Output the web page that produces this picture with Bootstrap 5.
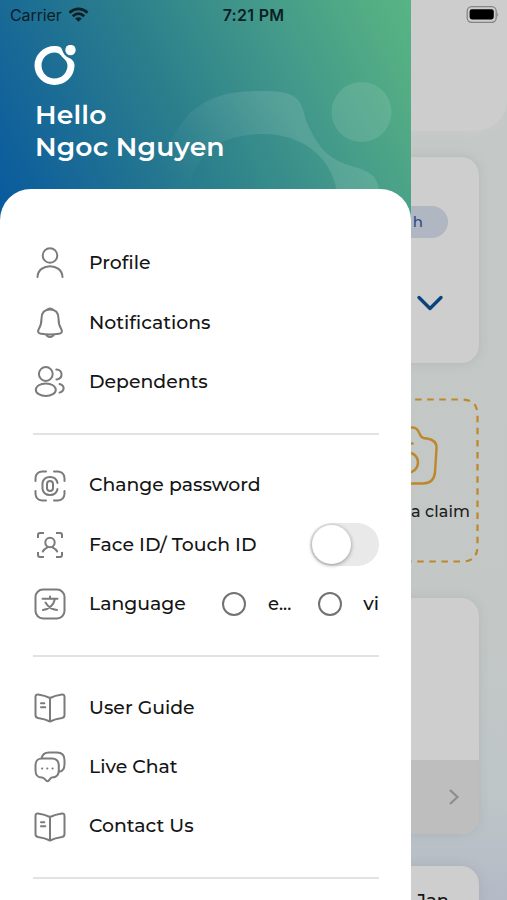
<!DOCTYPE html>
<html lang="en">
<head>
<meta charset="utf-8">
<meta name="viewport" content="width=device-width, initial-scale=1">
<title>Menu</title>
<link href="https://cdn.jsdelivr.net/npm/bootstrap@5.3.0/dist/css/bootstrap.min.css" rel="stylesheet">
<style>
body{font-family:Montserrat,Inter,sans-serif;color:#151515;background:#c3c8c6}
.phone{width:507px;height:900px;background:linear-gradient(180deg,#c4c9c7 0,#c3c8c6 620px,#bfc6c8 790px,#b4bac6 900px)}
/* dimmed page behind the drawer */
.page-top{height:131px;background:#cdcdcd;border-radius:0 0 32px 0;box-shadow:0 0 12px #c9cccb}
.tile{width:479px;background:#cecece;box-shadow:0 0 10px rgba(120,135,135,.25)}
.plan{height:206px;margin-top:26px;border-radius:0 18px 18px 0}
.pill{width:60px;height:32px;border-radius:16px;background:#b0b6c2;color:#2c4a86;font-size:15px;font-weight:500;margin:49px 31px 0 0;padding-right:25px}
.chev{margin:53px 33px 0 0}
.claim{width:479px;height:165px;margin-top:35px}
.claim-text{font-size:16px;font-weight:500;letter-spacing:.1px;line-height:24px;margin-right:9px;margin-top:12px;color:#1c1f1e}
.news{height:236px;margin-top:35px;border-radius:0 18px 18px 0}
.news-foot{height:74px;background:#bebebe;border-radius:0 0 18px 0;padding-right:19px}
.last{height:40px;margin-top:32px;border-radius:0 18px 0 0;padding:23px 30px 0 0;font-size:18px;font-weight:500;line-height:24px}
/* drawer */
.drawer{width:411px;background:#fff}
.hero{height:220px;padding:45px 34px 0;color:#fff;background:linear-gradient(64deg,#075a9e 0%,#176798 17%,#2a7e8c 43%,#43998a 70%,#54ae84 92%,#57b483 100%)}
.greet{font-size:26.6px;font-weight:600;line-height:32px;letter-spacing:.18px;margin:13px 0 0 1px}
.sheet{margin-top:-31px;border-radius:31px 31px 0 0;background:#fff;padding:44.6px 32px 0 33px}
.item{height:59.4px;font-size:18.85px;font-weight:500}
.item svg{width:34px;height:34px;margin-right:22px;flex:none}
.rule{height:2px;background:#e2e2e2;margin:21px 0 21.1px}
.switch-track{width:69px;height:43px;border-radius:22px;background:#e9e9e9;padding:2px}
.knob{width:39px;height:39px;border-radius:50%;background:#fff;box-shadow:0 1px 4px rgba(0,0,0,.38)}
.ring{width:24px;height:24px;border:2px solid #727272;border-radius:50%}
.lang-en{width:24px;margin:0 26px 0 22px;font-size:18px;white-space:nowrap}
.lang-vi{width:37px}
.status{font-family:Inter,sans-serif;font-size:16px;line-height:20px;color:#0c2025;height:30px;padding:0 8px 0 10px}
.carrier{letter-spacing:-.1px}
.wifi{margin-left:6px}
.time{letter-spacing:.3px}
.ic{fill:none;stroke:#7b7b7b;stroke-width:2;stroke-linecap:round;stroke-linejoin:round}
</style>
<script src="https://cdn.jsdelivr.net/npm/bootstrap@5.3.0/dist/js/bootstrap.bundle.min.js"></script>
</head>
<body>
<div class="phone position-relative overflow-hidden">

  <main class="d-flex flex-column">
    <div class="page-top"></div>
    <section class="tile plan d-flex flex-column align-items-end">
      <div class="pill d-flex align-items-center justify-content-end">h</div>
      <svg class="chev" width="32" height="24" viewBox="0 0 32 24" fill="none" stroke="#0b4279" stroke-width="3.4" stroke-linecap="round" stroke-linejoin="round"><path d="M5 6.500 16 17.500 27 6.500"/></svg>
    </section>
    <section class="claim position-relative d-flex flex-column align-items-end">
      <svg class="position-absolute top-0 start-0" width="479" height="165" fill="none" stroke="#bd872a" stroke-width="2.2"><path stroke-dasharray="6.500 5.600" d="M403 1.500H462Q477.500 1.500 477.500 17V148Q477.500 163.500 462 163.500H403"/></svg>
      <svg width="78" height="90" viewBox="401 398.500 78 90" fill="none" stroke="#bd872a" stroke-width="2.4" stroke-linecap="round"><path d="M401 428H412C417 428 418 431 420 435 421 438 423 439 427 439 433 440 437 443 436.500 449L435 473C434 481 430 484 423 484H401"/><circle cx="408" cy="463" r="10"/><path d="M404 444H412.500"/></svg>
      <div class="claim-text">Make a claim</div>
    </section>
    <section class="tile news d-flex flex-column justify-content-end">
      <div class="news-foot d-flex align-items-center justify-content-end">
        <svg width="12" height="18" viewBox="0 0 12 18" fill="none" stroke="#8d8d8d" stroke-width="2.200"><path d="M2 2 9.500 9 2 16"/></svg>
      </div>
    </section>
    <section class="tile last text-end">Jan</section>
  </main>

  <aside class="drawer position-absolute top-0 start-0 h-100 overflow-hidden">
    <header class="hero position-relative">
      <svg class="position-absolute top-0 start-0" width="411" height="220">
        <defs><linearGradient id="fade" gradientUnits="userSpaceOnUse" x1="165" y1="170" x2="260" y2="90"><stop offset="0" stop-color="#fff" stop-opacity="0"/><stop offset="1" stop-color="#fff" stop-opacity=".12"/></linearGradient></defs>
        <path fill="url(#fade)" d="M155 200C157 169 168 138 189 114 211 94 235 91 262 91 279 91 290 92 297 99 304 106 303 114 308 125 315 141 323 153 338 161 350 167 365 168 373 176 378 181 379 188 382 200H338C335 157 302 134 263 134 216 134 188 158 190 200Z"/>
        <circle cx="361.500" cy="112" r="30" fill="#fff" fill-opacity=".11"/>
      </svg>
      <svg class="d-block position-relative" width="42" height="41" viewBox="34 45 42 41"><path fill="#fff" fill-rule="evenodd" d="M54.500 46C58 45.800 61 46.500 62 49.500 63 53 65 56 68 57.500 71 58.500 74.500 61 74.500 65.500A20 19.500 0 1 1 54.500 46ZM54.500 52.500A13 13 0 1 0 67.500 65.500C67 60 63.500 59 61 55.500 59.500 53.500 57.500 52.500 54.500 52.500Z"/><circle cx="70.500" cy="50" r="5.200" fill="#fff"/></svg>
      <div class="greet position-relative text-nowrap"><div>Hello</div><div>Ngoc Nguyen</div></div>
    </header>

    <nav class="sheet position-relative">
      <div class="item d-flex align-items-center">
        <svg class="ic" viewBox="0 0 34 34"><circle cx="17" cy="9.500" r="7.300"/><path d="M4.500 31C5 16.500 29 16.500 29.500 31"/></svg>Profile
      </div>
      <div class="item d-flex align-items-center">
        <svg class="ic" viewBox="0 0 34 34"><path d="M13.500 4Q17 1 20.500 4M17 3.500C11 3.500 8.500 7.500 8.500 12.500 8.500 17.500 8 19.500 5.800 23 4.500 25.500 5 27.500 8 27.800Q17 29 26 27.800C29 27.500 29.500 25.500 28.200 23 26 19.500 25.500 17.500 25.500 12.500 25.500 7.500 23 3.500 17 3.500ZM13 28.500Q14 31 17 31T21 28.500"/></svg>Notifications
      </div>
      <div class="item d-flex align-items-center">
        <svg class="ic" viewBox="0 0 34 34"><circle cx="12.800" cy="9" r="6.900"/><ellipse cx="12.800" cy="24.700" rx="10" ry="6.300"/><path d="M23.300 4.500C30 5 30.500 13.500 23.500 14.600M26.500 19C32 20.500 32 26 26.500 27.600"/></svg>Dependents
      </div>
      <div class="rule"></div>
      <div class="item d-flex align-items-center">
        <svg class="ic" viewBox="0 0 34 34"><path d="M2.500 12V9Q3 3 9 2.500H13M21 2.500H25Q31 3 31.500 9V12M31.500 22V25Q31 31 25 31.500H21M13 31.500H9Q3 31 2.500 25V22"/><path d="M24.500 14C23 6 11 6 9.500 14V20C11 28 23 28 24.500 20"/><path d="M14 14.500Q14.500 12 17 12T20 14.500V19.500Q19.500 22 17 22T14 19.500Z"/></svg>Change password
      </div>
      <div class="item d-flex align-items-center">
        <svg class="ic" viewBox="0 0 34 34"><path stroke-linecap="butt" d="M5 10V7Q5 5 7 5H11M23 5H27Q29 5 29 7V10M29 24V27Q29 29 27 29H23M11 29H7Q5 29 5 27V24"/><circle cx="17" cy="14.500" r="4.700"/><path d="M9.800 23.500Q11 21 14.500 19.300M19.500 19.300Q23 21 24.200 23.500"/></svg><span class="text-nowrap">Face ID/ Touch ID</span>
        <div class="switch-track ms-auto"><div class="knob"></div></div>
      </div>
      <div class="item d-flex align-items-center">
        <svg class="ic" viewBox="0 0 34 34"><rect x="2.500" y="2.500" width="29" height="29" rx="7.500"/><path d="M9.500 11.800H24.500M17 9.500V11.500M22 12C20.500 18 16 22 10 23M12.500 15.500C14.500 19 19 22.500 24 23"/></svg>Language
        <div class="d-flex align-items-center ms-auto"><div class="ring"></div><div class="lang-en">e...</div><div class="ring"></div><div class="lang-vi text-end">vi</div></div>
      </div>
      <div class="rule"></div>
      <div class="item d-flex align-items-center">
        <svg class="ic" viewBox="0 0 34 34"><path id="book" d="M17 7Q12 4.500 5 3.500 2.500 3.300 2.500 6V24Q2.500 26.500 5 27 12 28 17 30.500 22 28 29 27 31.500 26.500 31.500 24V6Q31.500 3.300 29 3.500 22 4.500 17 7ZM17 7V30.500M8 12.200H11.300M8 16.300H12.300"/></svg>User Guide
      </div>
      <div class="item d-flex align-items-center">
        <svg class="ic" viewBox="0 0 34 34"><path d="M9 8.500H19C24 8.500 25.800 11 25.800 16V20C25.800 25 24 27.500 19 27.500 17 27.500 16.500 31.200 14.500 31.200S12 27.500 9 27.500C4 27.500 2.500 25 2.500 20V16C2.500 11 4 8.500 9 8.500ZM8.500 8.200C9.500 4 11.500 2.500 16 2.500H24C29.500 2.500 31.500 5 31.500 10V14C31.500 19 30 21.500 26 21.800M9 18.500H9.200M14.200 18.500H14.400M19.500 18.500H19.700"/></svg>Live Chat
      </div>
      <div class="item d-flex align-items-center">
        <svg class="ic" viewBox="0 0 34 34"><use href="#book"/></svg>Contact Us
      </div>
      <div class="rule"></div>
    </nav>
  </aside>

  <div class="status position-absolute top-0 start-0 w-100 d-flex align-items-center">
    <span class="carrier">Carrier</span>
    <svg class="wifi" width="21" height="16" viewBox="0 0 22 16" fill="none" stroke="#0c2025" stroke-width="2.800"><path d="M1.500 5.500Q11-2.500 20.500 5.500M5 9.300Q11 4 17 9.300"/><path fill="#0c2025" stroke="none" d="M7.500 11.700Q11 9 14.500 11.700L11 15.200Z"/></svg>
    <span class="time position-absolute start-50 translate-middle-x fw-semibold">7:21 PM</span>
    <svg class="ms-auto" width="34" height="18" viewBox="0 0 34 18"><rect x="2.200" y="0.700" width="29" height="15.600" rx="4.500" fill="none" stroke="#858585" stroke-width="1.300"/><rect x="4.600" y="3.200" width="24.200" height="10.200" rx="2.300" fill="#000"/><path d="M32.300 6Q34 8.500 32.300 11Z" fill="#858585"/></svg>
  </div>
</div>
</body>
</html>
